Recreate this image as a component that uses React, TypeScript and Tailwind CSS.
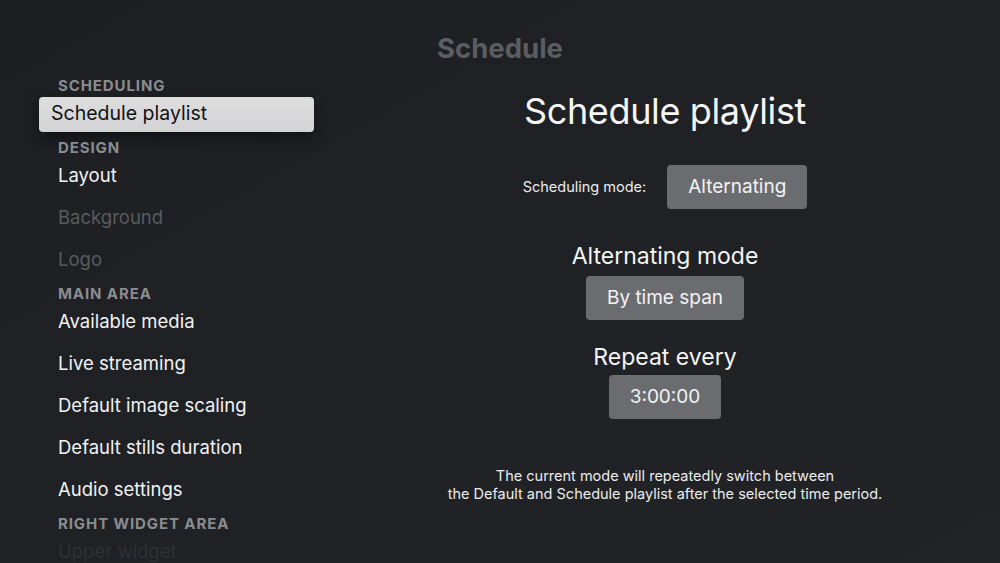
const font = { fontFamily: "Inter, 'Noto Sans', sans-serif" };

type Row =
  | { kind: "header"; label: string }
  | { kind: "item"; label: string; focused?: boolean; disabled?: boolean; faded?: boolean };

const rows: Row[] = [
  { kind: "header", label: "Scheduling" },
  { kind: "item", label: "Schedule playlist", focused: true },
  { kind: "header", label: "Design" },
  { kind: "item", label: "Layout" },
  { kind: "item", label: "Background", disabled: true },
  { kind: "item", label: "Logo", disabled: true },
  { kind: "header", label: "Main area" },
  { kind: "item", label: "Available media" },
  { kind: "item", label: "Live streaming" },
  { kind: "item", label: "Default image scaling" },
  { kind: "item", label: "Default stills duration" },
  { kind: "item", label: "Audio settings" },
  { kind: "header", label: "Right widget area" },
  { kind: "item", label: "Upper widget", faded: true },
];

function SidebarRow({ row }: { row: Row }) {
  if (row.kind === "header") {
    return (
      <div className="shrink-0 pt-[6px] pl-[58px] text-[15px] leading-[14px] font-bold uppercase tracking-[0.06em] text-[#8b8c90]">
        {row.label}
      </div>
    );
  }
  if (row.focused) {
    return (
      <div className="shrink-0 h-[42px] flex items-center">
        <div className="ml-[39px] w-[275px] h-[35px] flex items-center px-[12px] rounded-[4px] bg-gradient-to-b from-[#dededf] to-[#d3d3d5] shadow-[0_6px_14px_rgba(0,0,0,0.45)] text-[19.5px] text-[#111113]">
          {row.label}
        </div>
      </div>
    );
  }
  const color = row.faded ? "text-[#2f3033]" : row.disabled ? "text-[#5a5b5f]" : "text-[#f2f2f3]";
  return (
    <div className={`shrink-0 h-[42px] flex items-center pl-[58px] text-[18.5px] ${color}`}>{row.label}</div>
  );
}

function Pill({ children }: { children: string }) {
  return (
    <div className="h-[44px] px-[21px] flex items-center justify-center rounded-[4px] bg-[#6b6c70] text-[19px] text-[#f3f3f4]">
      {children}
    </div>
  );
}

export default function App() {
  return (
    <div
      className="w-[1000px] h-[563px] overflow-hidden bg-gradient-to-br from-[#1d1f23] via-[#1f2125] to-[#222326] flex flex-col"
      style={font}
    >
      <div className="shrink-0 pt-[32px] h-[73px] text-center text-[27.5px] leading-[32px] font-bold text-[#5b5d61]">
        Schedule
      </div>
      <div className="flex flex-1 min-h-0">
        <div className="w-[330px] flex flex-col">
          {rows.map((r, i) => (
            <SidebarRow key={i} row={r} />
          ))}
        </div>
        <div className="flex-1 flex flex-col items-center pt-[15px]">
          <h1 className="text-[36px] leading-[46px] tracking-[-0.01em] text-[#f5f5f6]">Schedule playlist</h1>
          <div className="mt-[31px] flex items-center gap-[21px]">
            <span className="text-[14.5px] text-[#ececed]">Scheduling mode:</span>
            <Pill>Alternating</Pill>
          </div>
          <div className="mt-[32px] text-[23px] leading-[30px] text-[#f5f5f6]">Alternating mode</div>
          <div className="mt-[5px]">
            <Pill>By time span</Pill>
          </div>
          <div className="mt-[22px] text-[23px] leading-[30px] text-[#f5f5f6]">Repeat every</div>
          <div className="mt-[3px]">
            <Pill>3:00:00</Pill>
          </div>
          <p className="mt-[48px] text-center text-[14.5px] leading-[18px] text-[#ececed]">
            The current mode will repeatedly switch between
            <br />
            the Default and Schedule playlist after the selected time period.
          </p>
        </div>
      </div>
    </div>
  );
}
